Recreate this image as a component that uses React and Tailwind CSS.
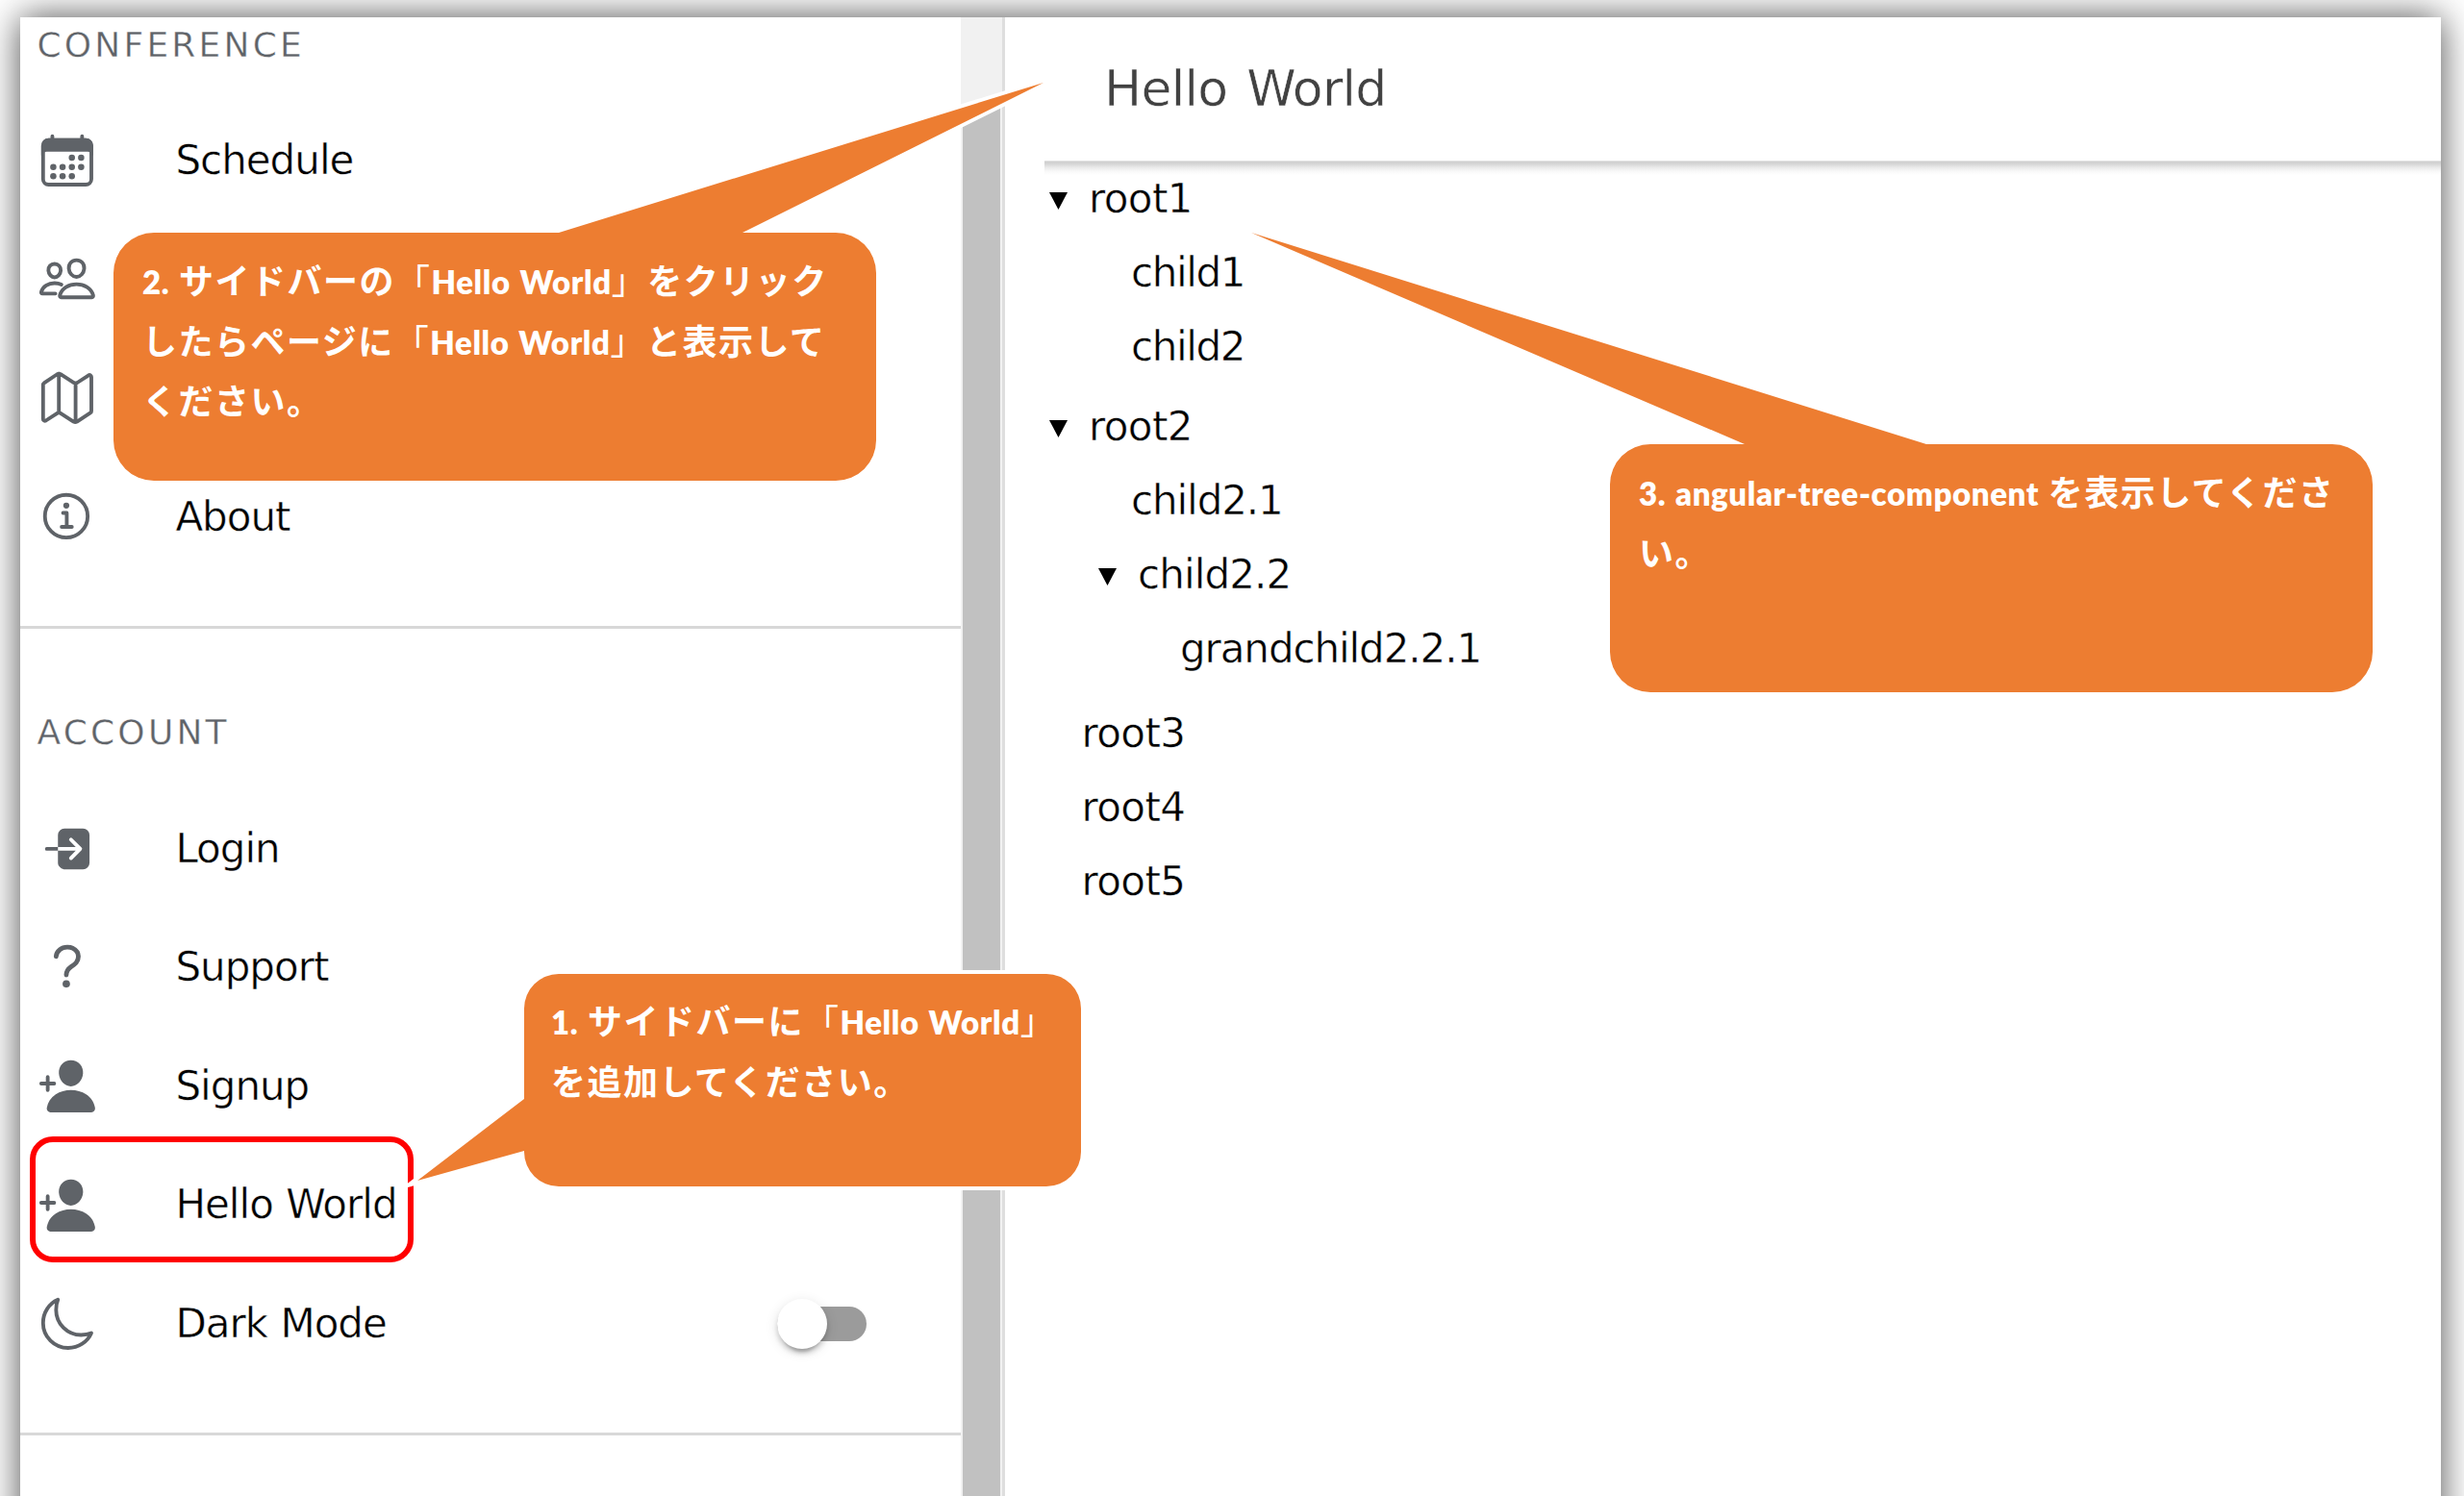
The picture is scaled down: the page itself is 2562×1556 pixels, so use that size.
import React from 'react';
import {
  IoPeopleOutline,
  IoMapOutline,
  IoInformationCircleOutline,
  IoLogIn,
  IoHelp,
  IoPersonAdd,
  IoMoonOutline,
} from 'react-icons/io5';

const ICON = 'block size-[61.8px] shrink-0 text-[#5f6368]';

function CalendarIcon() {
  return (
    <svg viewBox="0 0 512 512" className={ICON} fill="currentColor">
      <rect x="48" y="80" width="416" height="384" rx="48" fill="none" stroke="currentColor" strokeWidth="32" strokeLinejoin="round" />
      <path d="M128 48v32M384 48v32" stroke="currentColor" strokeWidth="32" strokeLinecap="round" />
      <path d="M32 212v-84a64 64 0 0 1 64-64h320a64 64 0 0 1 64 64v84h-16a32 32 0 0 0-32-32H80a32 32 0 0 0-32 32z" />
      <circle cx="296" cy="232" r="27" />
      <circle cx="376" cy="232" r="27" />
      <circle cx="136" cy="312" r="27" />
      <circle cx="216" cy="312" r="27" />
      <circle cx="296" cy="312" r="27" />
      <circle cx="376" cy="312" r="27" />
      <circle cx="136" cy="392" r="27" />
      <circle cx="216" cy="392" r="27" />
      <circle cx="296" cy="392" r="27" />
    </svg>
  );
}

function MenuItem({ icon, label, children }) {
  return (
    <li className="flex h-[123.6px] items-center pl-[18.1px] pr-[98px]">
      {icon}
      {label && (
        <span className="ml-[81.500px] text-[42px] leading-none tracking-[-1px] whitespace-nowrap text-black [word-spacing:1px] [-webkit-text-stroke:0.5px_white]">
          {label}
        </span>
      )}
      {children}
    </li>
  );
}

function SectionTitle({ children }) {
  return (
    <h2 className="flex h-[60px] items-center pb-[2px] pl-[17.500px] text-[36px] leading-none tracking-[3.2px] text-[#5f6368] [-webkit-text-stroke:0.4px_white]">
      {children}
    </h2>
  );
}

function Toggle() {
  return (
    <div className="ml-auto flex h-[36px] w-[93px] items-center rounded-full bg-[#9b9b9b]">
      <div className="size-[51.5px] rounded-full bg-white shadow-[0_8px_3px_-5px_rgba(0,0,0,0.2),0_5px_5px_0_rgba(0,0,0,0.14),0_3px_13px_0_rgba(0,0,0,0.12)]" />
    </div>
  );
}

function Sidebar() {
  return (
    <aside className="flex h-full w-[978px] shrink-0 flex-col bg-white">
      <SectionTitle>CONFERENCE</SectionTitle>
      <ul className="mt-[27px] flex flex-col">
        <MenuItem icon={<CalendarIcon />} label="Schedule" />
        <MenuItem icon={<IoPeopleOutline className={ICON} />} />
        <MenuItem icon={<IoMapOutline className={ICON} />} />
        <MenuItem icon={<IoInformationCircleOutline className={ICON} />} label="About" />
      </ul>
      <div className="mt-[52px] h-[3px] shrink-0 bg-[#d8d8d8]" />
      <div className="mt-[79px]">
        <SectionTitle>ACCOUNT</SectionTitle>
      </div>
      <ul className="mt-[27.500px] flex flex-col">
        <MenuItem icon={<IoLogIn className={ICON} />} label="Login" />
        <MenuItem icon={<IoHelp className={ICON} />} label="Support" />
        <MenuItem icon={<IoPersonAdd className={ICON} />} label="Signup" />
        <MenuItem icon={<IoPersonAdd className={ICON} />} label="Hello World" />
        <MenuItem icon={<IoMoonOutline className={ICON} />} label="Dark Mode">
          <Toggle />
        </MenuItem>
      </ul>
      <div className="mt-[51px] h-[3px] shrink-0 bg-[#d8d8d8]" />
    </aside>
  );
}

function ScrollBar() {
  return (
    <div className="flex h-full w-[46px] shrink-0 border-r-[3px] border-[#dedede] bg-[#f1f1f1] pt-[92px] pl-[2px]">
      <div className="h-full w-[39px] bg-[#c1c1c1]" />
    </div>
  );
}

function Branch({ label, className }) {
  return (
    <div className={`flex h-[77.3px] items-center ${className}`}>
      <svg viewBox="0 0 19 18" className="mt-[4px] h-[18px] w-[19px] shrink-0">
        <path d="M0 0H19L9.500 18Z" fill="#000" />
      </svg>
      <span className="ml-[22px] leading-none whitespace-nowrap">{label}</span>
    </div>
  );
}

function Leaf({ label, className }) {
  return (
    <div className={`flex h-[77.3px] items-center ${className}`}>
      <span className="leading-none whitespace-nowrap">{label}</span>
    </div>
  );
}

function Page() {
  return (
    <main className="flex min-w-0 flex-1 flex-col bg-white pl-[41px]">
      <header className="flex h-[149px] shrink-0 items-center pb-[2px] pl-[62px]">
        <h1 className="text-[52px] leading-none tracking-[-0.7px] whitespace-nowrap text-[#424242] [word-spacing:4px] [-webkit-text-stroke:0.5px_white]">
          Hello World
        </h1>
      </header>
      <div className="-mb-[14px] h-[15px] shrink-0 bg-[linear-gradient(to_bottom,#e2e2e2_0px,#e2e2e2_1px,#cfcfcf_1px,#d3d3d3_3px,#e9e9e9_7px,#f8f8f8_11px,#ffffff_15px)]" />
      <div className="flex flex-col text-[42px] tracking-[-1.1px] text-black [-webkit-text-stroke:0.5px_white]">
        <Branch label="root1" className="pl-[5px] tracking-[-0.600px]" />
        <Leaf label="child1" className="pl-[90px] tracking-[-1.400px]" />
        <Leaf label="child2" className="pl-[90px] tracking-[-1.400px]" />
        <Branch label="root2" className="mt-[5px] pl-[5px] tracking-[-0.600px]" />
        <Leaf label="child2.1" className="pl-[90px]" />
        <Branch label="child2.2" className="pl-[56px] tracking-[-0.900px]" />
        <Leaf label="grandchild2.2.1" className="pl-[141px]" />
        <Leaf label="root3" className="mt-[10px] pl-[38.500px] tracking-[-0.600px]" />
        <Leaf label="root4" className="pl-[38.500px] tracking-[-0.600px]" />
        <Leaf label="root5" className="pl-[38.500px] tracking-[-0.600px]" />
      </div>
    </main>
  );
}

/* Latin runs inside the callouts */
function En({ children }) {
  return <span className="font-['Lato'] text-[33px] font-extrabold tracking-[0.6px] [word-spacing:1.5px]">{children}</span>;
}

/* Corner brackets are drawn in a lighter weight */
function Br({ children }) {
  return <span className="font-normal">{children}</span>;
}

function Line({ children }) {
  return <p className="flex h-[62.6px] items-baseline whitespace-pre">{children}</p>;
}

function Callout({ className, children }) {
  return (
    <div className={`absolute flex flex-col font-['Noto_Sans_CJK_JP',sans-serif] text-[36px] leading-[62.600px] font-bold tracking-[1.5px] text-white ${className}`}>
      {children}
    </div>
  );
}

function CalloutShapes() {
  return (
    <svg
      viewBox="0 0 2562 1556"
      className="absolute inset-0 h-[1556px] w-[2562px]"
      fill="#ed7d31"
      stroke="#fff"
      strokeWidth="8"
      strokeMiterlimit="20"
      paintOrder="stroke"
    >
      <path d="M160 242H581L1085 86L772 242H869A42 42 0 0 1 911 284V458A42 42 0 0 1 869 500H160A42 42 0 0 1 118 458V284A42 42 0 0 1 160 242Z" />
      <path d="M1716 462H1814L1301 242L2003 462H2425A42 42 0 0 1 2467 504V678A42 42 0 0 1 2425 720H1716A42 42 0 0 1 1674 678V504A42 42 0 0 1 1716 462Z" />
      <path d="M581 1013H1088A36 36 0 0 1 1124 1049V1198A36 36 0 0 1 1088 1234H581A36 36 0 0 1 545 1198V1197L434 1228L545 1143V1049A36 36 0 0 1 581 1013Z" />
    </svg>
  );
}

export default function App() {
  return (
    <div className="relative h-[1556px] w-[2562px] overflow-hidden bg-white pt-[18px] pl-[21px] font-['DejaVu_Sans',sans-serif]">
      <div className="flex h-[1640px] w-[2517px] overflow-hidden bg-white shadow-[0_0_36px_rgba(0,0,0,0.7)]">
        <Sidebar />
        <ScrollBar />
        <Page />
      </div>

      <div className="absolute top-[1182px] left-[31px] h-[131px] w-[399px] rounded-[24px] border-[6px] border-[#ff0000]" />

      <CalloutShapes />

      <Callout className="top-[259px] left-[148px]">
        <Line><En>2. </En>サイドバーの<Br>「</Br><En>Hello World</En><Br>」</Br>をクリック</Line>
        <Line>したらページに<Br>「</Br><En>Hello World</En><Br>」</Br>と表示して</Line>
        <Line>ください。</Line>
      </Callout>
      <Callout className="top-[479px] left-[1704px]">
        <Line><En>3. angular-tree-component </En>を表示してくださ</Line>
        <Line>い。</Line>
      </Callout>
      <Callout className="top-[1029px] left-[573px]">
        <Line><En>1. </En>サイドバーに<Br>「</Br><En>Hello World</En><Br>」</Br></Line>
        <Line>を追加してください。</Line>
      </Callout>
    </div>
  );
}
